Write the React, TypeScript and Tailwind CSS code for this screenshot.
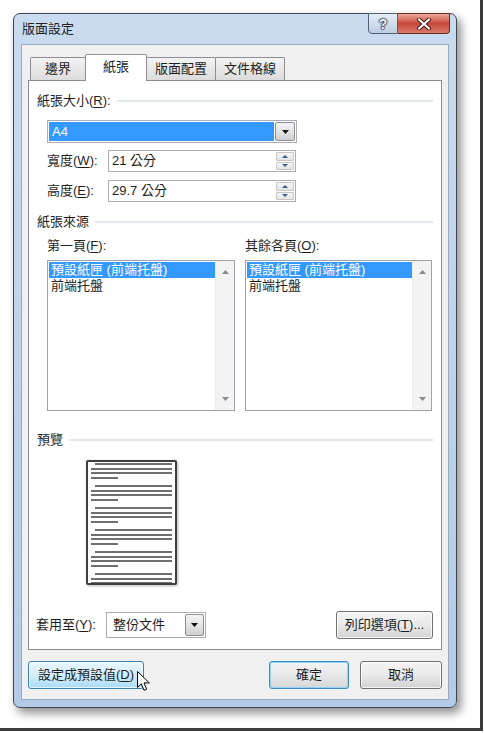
import React from "react";

const Tri = ({ dir = "down", color = "#000", w = 7, h = 4 }: { dir?: "up" | "down"; color?: string; w?: number; h?: number }) => (
  <svg width={w} height={h} viewBox={`0 0 ${w} ${h}`}>
    {dir === "down" ? (
      <polygon points={`0,0 ${w},0 ${w / 2},${h}`} fill={color} />
    ) : (
      <polygon points={`0,${h} ${w},${h} ${w / 2},0`} fill={color} />
    )}
  </svg>
);

const DropBtn = ({ w }: { w: string }) => (
  <div className={`${w} h-full rounded-[2px] border border-[#8e8f92] bg-linear-to-b from-[#f3f3f3] via-[#e5e5e5] to-[#cfcfcf] flex items-center justify-center`}>
    <Tri dir="down" color="#111" w={7} h={4} />
  </div>
);

const SpinBox = ({ value }: { value: string }) => (
  <div className="w-[188px] h-[22px] border border-[#abadb3] bg-white flex">
    <div className="flex-1 pl-[3px] leading-[20px]">{value}</div>
    <div className="w-[20px] flex flex-col gap-[1px] p-[1px]">
      <div className="flex-1 rounded-[1px] border border-[#c4c6ca] bg-linear-to-b from-[#f6f6f6] to-[#e3e3e3] flex items-center justify-center">
        <Tri dir="up" color="#3e5d8a" w={6} h={3} />
      </div>
      <div className="flex-1 rounded-[1px] border border-[#c4c6ca] bg-linear-to-b from-[#f6f6f6] to-[#e3e3e3] flex items-center justify-center">
        <Tri dir="down" color="#3e5d8a" w={6} h={3} />
      </div>
    </div>
  </div>
);

const ListBox = ({ w }: { w: string }) => (
  <div className={`${w} h-[151px] border border-[#9fa3a9] bg-white flex`}>
    <div className="flex-1 pt-[1px] pl-[1px] text-[13px]">
      <div className="bg-[#3399ff] text-white h-[16px] leading-[16px] pl-[2px] whitespace-nowrap">預設紙匣 (前端托盤)</div>
      <div className="h-[16px] leading-[16px] pl-[2px] whitespace-nowrap">前端托盤</div>
    </div>
    <div className="w-[19px] bg-[#f3f3f3] border-l border-[#eaeaea] flex flex-col justify-between items-center pt-[9px] pb-[9px]">
      <Tri dir="up" color="#8a8a8a" w={7} h={4} />
      <Tri dir="down" color="#8a8a8a" w={7} h={4} />
    </div>
  </div>
);

const Header = ({ children }: { children: React.ReactNode }) => (
  <div className="h-[16px] flex items-center gap-[6px]">
    <span className="leading-[16px] whitespace-nowrap">{children}</span>
    <div className="flex-1 h-[2px] bg-[#e2e9ee]" />
  </div>
);

const Group = () => (
  <div className="flex flex-col gap-[2.5px]">
    <div className="h-[2px] bg-[#6f6f6f] ml-[4px]" />
    <div className="h-[2px] bg-[#6f6f6f]" />
    <div className="h-[2px] bg-[#6f6f6f]" />
    <div className="h-[2px] bg-[#6f6f6f] w-[27px]" />
  </div>
);

const Btn = ({ children, w, kind = "normal" }: { children: React.ReactNode; w: string; kind?: "normal" | "default" | "hover" }) => {
  const base = `${w} h-[28px] rounded-[3px] flex items-center justify-center leading-[16px] whitespace-nowrap`;
  if (kind === "hover")
    return (
      <div className={`${base} border border-[#3c7fb1] bg-linear-to-b from-[#eaf6fd] via-[#d3edfb] to-[#a9dbf6] shadow-[inset_0_0_0_1px_rgba(255,255,255,0.7)]`}>
        {children}
      </div>
    );
  if (kind === "default")
    return (
      <div className={`${base} border border-[#3c8fc8] bg-linear-to-b from-[#f4f4f4] via-[#e9e9e9] to-[#d6d6d6] shadow-[inset_0_0_0_1px_#8fd3f5]`}>
        {children}
      </div>
    );
  return (
    <div className={`${base} border border-[#707070] bg-linear-to-b from-[#f4f4f4] via-[#e9e9e9] to-[#d2d2d2] shadow-[inset_0_0_0_1px_rgba(255,255,255,0.8)]`}>
      {children}
    </div>
  );
};

export default function App() {
  return (
    <div className="w-[484px] h-[733px] bg-white font-['Liberation_Sans','Noto_Sans_CJK_TC',sans-serif] text-[#1e1e1e] text-[13px]">
      <div className="w-[483px] h-[731px] border-r-[3px] border-b-[3px] border-[#3c3c3c] pl-[13px] pt-[13px] relative">
        <div className="w-[444px] h-[695px] rounded-[7px] border border-[#3d4754] bg-linear-to-b from-[#c9dbee] to-[#b3cbe6] shadow-[4px_5px_10px_rgba(0,0,0,0.45)] flex flex-col">
          {/* Title bar */}
          <div className="h-[30px] flex justify-between items-start">
            <div className="pl-[8px] pt-[7px] leading-[16px] text-[#222]">版面設定</div>
            <div className="flex mr-[6px] -mt-px">
              <div className="w-[30px] h-[21px] rounded-bl-[4px] border border-[#4f627a] bg-linear-to-b from-[#e6eef7] to-[#bccde2] flex items-center justify-center">
                <span className="text-[#f2f5f9] font-bold text-[14px] leading-none [text-shadow:0_0_1px_#1a2230,0_0_1px_#1a2230,0_0_2px_#1a2230,0_0_2px_#1a2230]">?</span>
              </div>
              <div className="w-[52px] h-[21px] rounded-br-[4px] border border-l-0 border-[#6b2a22] bg-linear-to-b from-[#e9a89b] via-[#c8463b] to-[#d87b6b] flex items-center justify-center">
                <svg width="14" height="12" viewBox="0 0 14 12">
                  <path d="M2 1.5 L12 10.5 M12 1.5 L2 10.5" stroke="#3b1410" strokeWidth="4" strokeLinecap="round" />
                  <path d="M2 1.5 L12 10.5 M12 1.5 L2 10.5" stroke="#ffffff" strokeWidth="2.2" strokeLinecap="round" />
                </svg>
              </div>
            </div>
          </div>

          {/* Client area */}
          <div className="flex-1 mx-[7px] mb-[7px] bg-[#f0f0f0] border border-[#9aabbd] flex flex-col">
            {/* Tabs */}
            <div className="h-[26px] mt-[9px] ml-[8px] flex items-end relative z-10">
              <div className="w-[56px] h-[23px] rounded-t-[2px] border border-b-0 border-[#8c8e94] bg-linear-to-b from-[#f3f3f3] to-[#dcdcdc] flex items-center justify-center leading-[16px]">邊界</div>
              <div className="w-[62px] h-[27px] -mb-px -ml-px rounded-t-[2px] border border-b-0 border-[#8c8e94] bg-white flex items-center justify-center leading-[16px] pb-[2px]">紙張</div>
              <div className="w-[70px] h-[23px] -ml-px rounded-t-[2px] border border-b-0 border-[#8c8e94] bg-linear-to-b from-[#f3f3f3] to-[#dcdcdc] flex items-center justify-center leading-[16px]">版面配置</div>
              <div className="w-[70px] h-[23px] -ml-px rounded-t-[2px] border border-b-0 border-[#8c8e94] bg-linear-to-b from-[#f3f3f3] to-[#dcdcdc] flex items-center justify-center leading-[16px]">文件格線</div>
            </div>

            {/* Panel */}
            <div className="mx-[6px] h-[570px] border border-[#898c95] bg-white flex flex-col px-[8px]">
              <div className="mt-[12px]">
                <Header>
                  紙張大小(<u className="underline-offset-2">R</u>):
                </Header>
              </div>

              <div className="mt-[11px] ml-[10px] w-[250px] h-[23px] border border-[#abadb3] bg-white flex p-[1px] gap-[1px]">
                <div className="flex-1 bg-[#3399ff] text-white leading-[19px] pl-[3px]">A4</div>
                <DropBtn w="w-[20px]" />
              </div>

              <div className="mt-[7px] ml-[10px] flex items-center">
                <div className="w-[61px] leading-[16px]">
                  寬度(<u className="underline-offset-2">W</u>):
                </div>
                <SpinBox value="21 公分" />
              </div>
              <div className="mt-[8px] ml-[10px] flex items-center">
                <div className="w-[61px] leading-[16px]">
                  高度(<u className="underline-offset-2">E</u>):
                </div>
                <SpinBox value="29.7 公分" />
              </div>

              <div className="mt-[12px]">
                <Header>紙張來源</Header>
              </div>

              <div className="mt-[8px] ml-[10px] flex gap-[10px]">
                <div className="flex flex-col">
                  <div className="h-[16px] leading-[16px] mb-[6px]">
                    第一頁(<u className="underline-offset-2">F</u>):
                  </div>
                  <ListBox w="w-[188px]" />
                </div>
                <div className="flex flex-col">
                  <div className="h-[16px] leading-[16px] mb-[6px]">
                    其餘各頁(<u className="underline-offset-2">O</u>):
                  </div>
                  <ListBox w="w-[187px]" />
                </div>
              </div>

              <div className="mt-[21px]">
                <Header>預覽</Header>
              </div>

              <div className="mt-[12px] ml-[49px] w-[91px] h-[125px] border-2 border-[#3f3f3f] rounded-[2px] bg-white overflow-hidden px-[3px] pt-[1px] shadow-[1px_1px_3px_rgba(0,0,0,0.3)] flex flex-col gap-[6.5px]">
                <Group />
                <Group />
                <Group />
                <Group />
                <Group />
                <Group />
              </div>

              <div className="mt-auto mb-[10px] h-[28px] flex items-center">
                <div className="w-[69px] -ml-px leading-[16px]">
                  套用至(<u className="underline-offset-2">Y</u>):
                </div>
                <div className="ml-px w-[100px] h-[26px] border border-[#abadb3] bg-white flex p-[1px]">
                  <div className="flex-1 pl-[5px] leading-[22px]">整份文件</div>
                  <DropBtn w="w-[19px]" />
                </div>
                <div className="ml-auto">
                  <Btn w="w-[97px]">
                    列印選項(<u className="underline-offset-2">T</u>)...
                  </Btn>
                </div>
              </div>
            </div>

            {/* Buttons */}
            <div className="mt-[11px] px-[6px] flex justify-between">
              <Btn w="w-[116px]" kind="hover">
                設定成預設值(<u className="underline-offset-2">D</u>)
              </Btn>
              <div className="flex gap-[11px]">
                <Btn w="w-[80px]" kind="default">確定</Btn>
                <Btn w="w-[82px]">取消</Btn>
              </div>
            </div>
          </div>
        </div>

        {/* Mouse cursor */}
        <svg className="absolute left-[137px] top-[671px]" width="14" height="21" viewBox="0 0 14 21">
          <path d="M0.5 0.5 L0.5 16.5 L4.3 12.8 L7 19.3 L9.6 18.2 L7 11.9 L12.3 11.9 Z" fill="#ffffff" stroke="#000000" strokeWidth="1" strokeLinejoin="round" />
        </svg>
      </div>
    </div>
  );
}
